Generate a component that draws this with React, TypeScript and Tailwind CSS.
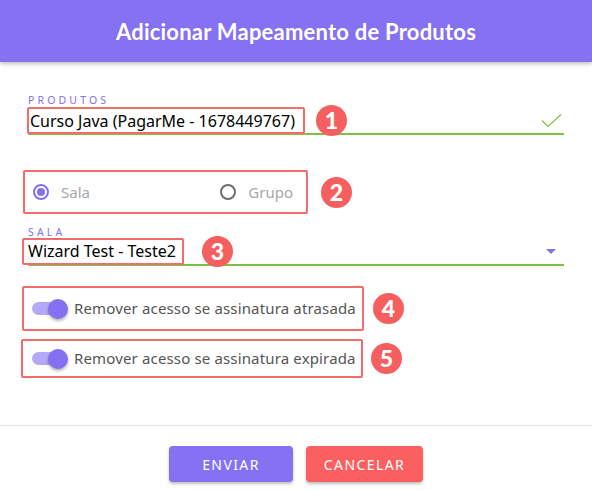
import React from 'react';

const font = { fontFamily: '"Noto Sans", Lato, sans-serif' };
const titleFont = { fontFamily: 'Lato, "Noto Sans", sans-serif' };

function Badge({ n }: { n: number }) {
  return (
    <span
      className="flex items-center justify-center w-[31px] h-[31px] rounded-full bg-[#f65f5f] text-white text-[23px] font-black leading-none shrink-0"
      style={titleFont}
    >
      {n}
    </span>
  );
}

function Toggle() {
  return (
    <span className="relative flex items-center w-[38px] h-[20px] shrink-0">
      <span className="ml-[2px] w-[30px] h-[13px] rounded-full bg-[#b3a9f6]" />
      <span className="absolute right-0 top-0 w-[20px] h-[20px] rounded-full bg-[#8470f0] shadow-[0_2px_3px_rgba(0,0,0,0.3)]" />
    </span>
  );
}

export default function App() {
  return (
    <div className="w-[592px] h-[491px] bg-white flex flex-col" style={font}>
      <div className="h-[62px] shrink-0 bg-[#8571f1] flex items-center justify-center shadow-[0_2px_4px_rgba(0,0,0,0.25)] relative z-10">
        <h1 className="text-white text-[22px] font-bold tracking-[0.01em]" style={titleFont}>Adicionar Mapeamento de Produtos</h1>
      </div>

      <div className="flex-1 px-[28px] pt-[32px]">
        {/* produtos */}
        <div className="text-[10.5px] leading-[12px] tracking-[0.3em] text-[#8470f0]">PRODUTOS</div>
        <div className="mt-[2px] h-[27px] flex items-center border-b-2 border-[#7cc142] relative">
          <span className="-ml-[1px] h-[27px] w-[278px] flex items-center px-[1px] border-2 border-[#f36b6b] rounded-[2px] text-[16px] text-black whitespace-nowrap">
            Curso Java (PagarMe - 1678449767)
          </span>
          <span className="ml-[11px]"><Badge n={1} /></span>
          <svg className="ml-auto mr-[2px]" width="21" height="15" viewBox="0 0 21 15" fill="none">
            <path d="M1 7.5 L7 13.5 L20 1.5" stroke="#7cc142" strokeWidth="1.2" />
          </svg>
        </div>

        {/* radio */}
        <div className="mt-[35px] flex items-center">
          <div className="-ml-[5px] w-[285px] h-[44px] border-2 border-[#f36b6b] rounded-[2px] flex items-center px-[8px]">
            <span className="w-[16px] h-[16px] rounded-full border-2 border-[#8470f0] flex items-center justify-center">
              <span className="w-[8px] h-[8px] rounded-full bg-[#8470f0]" />
            </span>
            <span className="ml-[12px] text-[15px] text-[#a8a8a8]">Sala</span>
            <span className="ml-auto w-[16px] h-[16px] rounded-full border-2 border-[#6f6f6f]" />
            <span className="ml-[12px] mr-[5px] text-[15px] text-[#a8a8a8]">Grupo</span>
          </div>
          <span className="ml-[13px]"><Badge n={2} /></span>
        </div>

        {/* sala */}
        <div className="mt-[12px] text-[10.5px] leading-[12px] tracking-[0.3em] text-[#8470f0]">SALA</div>
        <div className="mt-[0px] h-[28px] flex items-center border-b-2 border-[#7cc142]">
          <span className="-ml-[6px] h-[27px] w-[162px] flex items-center px-[4px] border-2 border-[#f36b6b] rounded-[2px] text-[16px] text-black whitespace-nowrap">
            Wizard Test - Teste2
          </span>
          <span className="ml-[18px]"><Badge n={3} /></span>
          <svg className="ml-auto mr-[8px]" width="10" height="5" viewBox="0 0 10 5">
            <path d="M0 0 L10 0 L5 5 Z" fill="#8470f0" />
          </svg>
        </div>

        {/* toggles */}
        <div className="mt-[20px] flex items-center">
          <div className="-ml-[6px] w-[342px] h-[45px] border-2 border-[#f36b6b] rounded-[2px] flex items-center pl-[6px]">
            <Toggle />
            <span className="ml-[6px] text-[15px] tracking-[0.01em] text-[#555] whitespace-nowrap">Remover acesso se assinatura atrasada</span>
          </div>
          <span className="ml-[9px]"><Badge n={4} /></span>
        </div>
        <div className="mt-[8px] flex items-center">
          <div className="-ml-[7px] w-[342px] h-[39px] border-2 border-[#f36b6b] rounded-[2px] flex items-center pl-[7px]">
            <Toggle />
            <span className="ml-[6px] text-[15px] tracking-[0.01em] text-[#555] whitespace-nowrap">Remover acesso se assinatura expirada</span>
          </div>
          <span className="ml-[8px]"><Badge n={5} /></span>
        </div>
      </div>

      <div className="h-[66px] shrink-0 border-t border-[#e2e2e2] flex justify-center gap-[13px] pt-[20px]">
        <button className="w-[124px] h-[36px] rounded-[4px] bg-[#8571f1] text-white text-[14px] tracking-[0.1em] shadow-[0_2px_3px_rgba(0,0,0,0.25)]">
          ENVIAR
        </button>
        <button className="w-[117px] h-[36px] rounded-[4px] bg-[#fc5f5f] text-white text-[14px] tracking-[0.1em] shadow-[0_2px_3px_rgba(0,0,0,0.25)]">
          CANCELAR
        </button>
      </div>
    </div>
  );
}
